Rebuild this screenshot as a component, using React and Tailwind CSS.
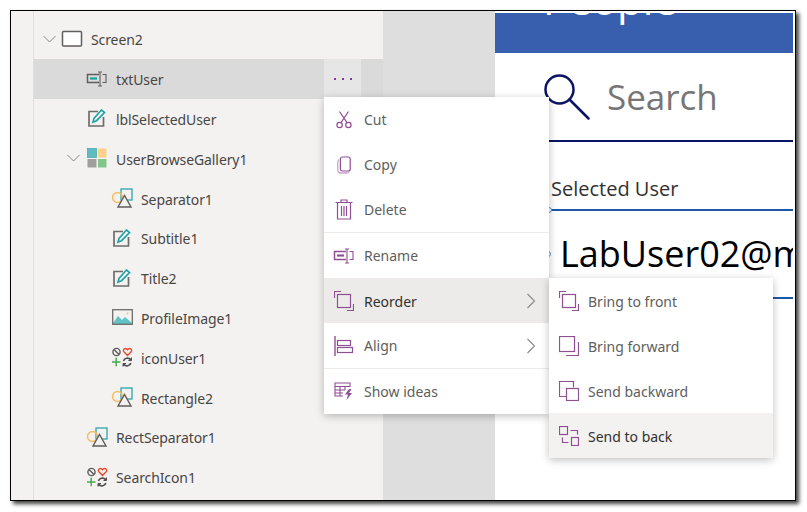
import React from 'react';

const Chevron = ({ className }) => (
  <svg width="13" height="8" viewBox="0 0 13 8" fill="none" stroke="#8a8886" strokeWidth="1" className={className}>
    <path d="M.5 1l6 6 6-6" />
  </svg>
);

const ChevronRight = () => (
  <svg width="10" height="16" viewBox="0 0 10 16" fill="none" stroke="#8a8886" strokeWidth="1.1" className="ml-auto mr-[13px]">
    <path d="M1.5 1l7 7-7 7" />
  </svg>
);

const ScreenIcon = () => (
  <svg width="22" height="18" viewBox="0 0 22 18" fill="#fff" stroke="#605e5c" strokeWidth="1.5">
    <rect x="1.5" y="1.5" width="19" height="14.5" rx="1" />
  </svg>
);

const InputIcon = ({ frame = '#605e5c', bar = '#16a0a0' }) => (
  <svg width="22" height="16" viewBox="0 0 22 16" fill="none">
    <path d="M13 3.5H1.5v8H13" stroke={frame} strokeWidth="1.5" />
    <path d="M4 7.5h7" stroke={bar} strokeWidth="2.2" />
    <path d="M12 1h4M14 1v14M12 15h4M16.5 3.5h3.5v8h-3.5" stroke={frame} strokeWidth="1.1" />
  </svg>
);

const LabelIcon = () => (
  <svg width="18" height="18" viewBox="0 0 18 18" fill="none">
    <path d="M10 2.5H1v14.5h14.5V8" stroke="#6e6c6a" strokeWidth="1.7" />
    <path d="M5 13l1-3.5L13.5 1l3 2.5-8 8.2z" fill="#fff" stroke="#22a3a3" strokeWidth="1.7" />
  </svg>
);

const GalleryIcon = () => (
  <svg width="20" height="20" viewBox="0 0 20 20">
    <rect x="0.5" y="0.5" width="9" height="9" fill="#5cbcc0" stroke="#2e9ea3" strokeWidth="0.6" />
    <rect x="11" y="0.5" width="8.5" height="9" fill="#fdd08c" />
    <rect x="0.5" y="11" width="9" height="8.5" fill="#a19f9d" />
    <rect x="11" y="11" width="8.5" height="8.5" fill="#81c688" />
  </svg>
);

const ShapesIcon = () => (
  <svg width="22" height="20" viewBox="0 0 22 20" fill="none">
    <rect x="10" y="1" width="11" height="11" stroke="#30a5a8" strokeWidth="1.3" />
    <circle cx="6.5" cy="9.5" r="5" stroke="#f8bc5c" strokeWidth="1.4" />
    <path d="M20 19H7l6.5-11.5z" fill="#f3f2f1" stroke="#605e5c" strokeWidth="1.4" />
  </svg>
);

const GlyphsIcon = () => (
  <svg width="22" height="20" viewBox="0 0 22 20" fill="none">
    <circle cx="5.5" cy="5" r="3.6" stroke="#605e5c" strokeWidth="1.4" />
    <path d="M3 2.5l5 5" stroke="#605e5c" strokeWidth="1.4" />
    <path d="M16.5 8.5l-3.6-3.8c-1.8-2.2 1.6-4.6 3.6-2 2-2.6 5.4-.2 3.6 2z" stroke="#ea4a2f" strokeWidth="1.4" />
    <path d="M1 15h8.5M5.2 10.8v8.5" stroke="#4aa84f" strokeWidth="1.5" />
    <path d="M12.5 14c.5-3 5-3.8 7-1.5M19.8 16c-.5 3-5 3.8-7 1.5" stroke="#514f4d" strokeWidth="1.6" />
    <path d="M20.5 10.5v3h-3M12 19.5v-3h3" fill="#514f4d" stroke="#514f4d" strokeWidth="1" />
  </svg>
);

const ImageIcon = () => (
  <svg width="21" height="16" viewBox="0 0 21 16" fill="none">
    <path d="M1 14l5-7 4 4 3-3 7 6v1H1z" fill="#61c3c3" />
    <rect x="0.7" y="0.7" width="19.6" height="14.6" stroke="#6e6c6a" strokeWidth="1.3" />
    <circle cx="15.5" cy="4.5" r="0.9" fill="#f8bc5c" />
  </svg>
);

const P = '#8f4f93';

const CutIcon = () => (
  <svg width="16" height="18" viewBox="0 0 16 18" fill="none" stroke={P} strokeWidth="1.2">
    <circle cx="3.6" cy="14" r="2.7" />
    <circle cx="12.4" cy="14" r="2.7" />
    <path d="M5 11.7L12.5 0.5M11 11.7L3.5 0.5" />
  </svg>
);

const CopyIcon = () => (
  <svg width="14" height="18" viewBox="0 0 14 18" fill="none">
    <path d="M2.2 3.5C1 4 .8 5 .8 6v8c0 2 1 3 3 3h6c1 0 1.6-.3 2-1" stroke="#c9a5cb" strokeWidth="1.3" />
    <rect x="3.4" y="1" width="9.8" height="14" rx="2" stroke={P} strokeWidth="1.2" />
  </svg>
);

const DeleteIcon = () => (
  <svg width="18" height="21" viewBox="0 0 18 21" fill="none" stroke={P} strokeWidth="1.2">
    <path d="M.5 3.5h17M6 3.5V1h6v2.5M2.5 3.5V20h13V3.5" />
    <path d="M6.5 7v10M9 7v10M11.5 7v10" />
  </svg>
);

const AlignIcon = () => (
  <svg width="20" height="20" viewBox="0 0 20 20" fill="none" stroke={P} strokeWidth="1.2">
    <path d="M1 0v20" strokeWidth="1.4" />
    <rect x="3.5" y="4.5" width="13" height="5" />
    <rect x="3.5" y="11.5" width="15" height="5" />
  </svg>
);

const IdeasIcon = () => (
  <svg width="20" height="19" viewBox="0 0 20 19" fill="none" stroke={P} strokeWidth="1.1">
    <path d="M1 1h15v3.5H1zM1 4.5V14h8M6 4.5V14M11 4.5V8M1 8h10M1 11h8" />
    <path d="M15 7l-4 5.5h3l-1.5 5.5 5.5-7h-3l2.5-4z" fill={P} stroke="none" />
  </svg>
);

const FrontIcon = () => (
  <svg width="20" height="20" viewBox="0 0 20 20" fill="none" stroke={P} strokeWidth="1.2">
    <path d="M.5 7V.5H7" />
    <path d="M13 19.5h6.5V13" />
    <rect x="3.5" y="3.5" width="13" height="13" />
  </svg>
);

const ForwardIcon = () => (
  <svg width="20" height="20" viewBox="0 0 20 20" fill="none" stroke={P} strokeWidth="1.2">
    <rect x=".5" y=".5" width="15" height="15" />
    <path d="M7 19.5h12.5V6" />
  </svg>
);

const BackwardIcon = () => (
  <svg width="20" height="20" viewBox="0 0 20 20" fill="none" stroke={P} strokeWidth="1.2">
    <path d="M7.5 15.5h-7V.5h14v6" />
    <rect x="7.5" y="7.5" width="12" height="12" />
  </svg>
);

const BackIcon = () => (
  <svg width="20" height="20" viewBox="0 0 20 20" fill="none" stroke={P} strokeWidth="1.2">
    <rect x=".5" y=".5" width="8" height="8" />
    <rect x="12.5" y="11.5" width="7" height="8" />
    <path d="M11.5 4.5h7v4M9.5 16.5h-6v-5" />
  </svg>
);

const treeRows = [
  { name: 'Screen2', pad: 'pl-[9px]', chevron: 'mr-[5px]', icon: <ScreenIcon />, gap: 'gap-[8px]' },
  { name: 'txtUser', pad: 'pl-[52px]', icon: <InputIcon />, gap: 'gap-[8px]', selected: true },
  { name: 'lblSelectedUser', pad: 'pl-[54px]', icon: <LabelIcon />, gap: 'gap-[10px]' },
  { name: 'UserBrowseGallery1', pad: 'pl-[33px]', chevron: 'mr-[7px]', icon: <GalleryIcon />, gap: 'gap-[9px]' },
  { name: 'Separator1', pad: 'pl-[77px]', icon: <ShapesIcon />, gap: 'gap-[8px]' },
  { name: 'Subtitle1', pad: 'pl-[79px]', icon: <LabelIcon />, gap: 'gap-[10px]' },
  { name: 'Title2', pad: 'pl-[79px]', icon: <LabelIcon />, gap: 'gap-[10px]' },
  { name: 'ProfileImage1', pad: 'pl-[78px]', icon: <ImageIcon />, gap: 'gap-[8px]' },
  { name: 'iconUser1', pad: 'pl-[77px]', icon: <GlyphsIcon />, gap: 'gap-[8px]' },
  { name: 'Rectangle2', pad: 'pl-[77px]', icon: <ShapesIcon />, gap: 'gap-[8px]' },
  { name: 'RectSeparator1', pad: 'pl-[52px]', icon: <ShapesIcon />, gap: 'gap-[8px]' },
  { name: 'SearchIcon1', pad: 'pl-[52px]', icon: <GlyphsIcon />, gap: 'gap-[8px]' },
];

const TreeRow = ({ row }) => (
  <div className={`relative flex h-[39.8px] shrink-0 items-center text-[14px] tracking-[-0.1px] text-[#484644] ${row.selected ? 'bg-[#dadada]' : ''} ${row.pad}`}>
    {row.chevron && <Chevron className={row.chevron} />}
    <div className={`flex items-center ${row.gap}`}>
      {row.icon}
      <span className="pt-[2px]">{row.name}</span>
    </div>
    {row.selected && (
      <div className="absolute left-[290px] top-0 flex h-full w-[37px] items-center justify-center gap-[6px] bg-[#e6e6e6]">
        <span className="h-[2px] w-[2px] bg-[#7d3c98]" />
        <span className="h-[2px] w-[2px] bg-[#7d3c98]" />
        <span className="h-[2px] w-[2px] bg-[#7d3c98]" />
      </div>
    )}
  </div>
);

const MenuItem = ({ icon, label, active, sub, hover, low, slot = 'w-[40px]' }) => (
  <div className={`flex h-[45px] items-center text-[14px] ${active ? 'bg-[#edebe9] text-[#323130]' : hover ? 'bg-[#f3f2f1] text-[#323130]' : 'text-[#605e5c]'}`}>
    <div className={`flex shrink-0 justify-center ${slot}`}>{icon}</div>
    <span className={low ? 'pt-[2px]' : ''}>{label}</span>
    {sub && <ChevronRight />}
  </div>
);

const Handle = ({ className }) => (
  <span className={`absolute h-[6px] w-[6px] rounded-full border border-[#4b8fd0] bg-white ${className}`} />
);

export default function App() {
  return (
    <div className="h-[512px] w-[807px] overflow-hidden bg-white pl-[10px] pt-[10px] font-['Noto_Sans',sans-serif]">
      <div className="relative flex h-[491px] w-[786px] overflow-hidden border border-black shadow-[3px_3px_4px_rgba(0,0,0,0.75)]">
        <div className="w-[22px] shrink-0 bg-[#f3f2f1]" />
        <div className="flex w-[350px] shrink-0 flex-col overflow-hidden border-l border-[#e1dfdd] bg-[#f3f2f1] pt-[8px]">
          {treeRows.map((row) => (
            <TreeRow key={row.name} row={row} />
          ))}
        </div>
        <div className="w-[112px] shrink-0 bg-[#dedede]" />
        <div className="flex min-w-0 flex-1 flex-col overflow-hidden bg-white pr-[2px] pt-[2px] font-['Open_Sans',sans-serif]">
          <div className="h-[40px] shrink-0 overflow-hidden bg-[#375fae] pl-[48px]">
            <div className="mt-[-35px] text-[42px] leading-[42px] text-white">People</div>
          </div>
          <div className="flex h-[87px] shrink-0 items-center gap-[17px] pl-[49px]">
            <svg width="46" height="46" viewBox="0 0 46 46" fill="none" stroke="#0b1464" strokeWidth="2.5" className="mt-[1px]">
              <circle cx="15.5" cy="15.5" r="14" />
              <path d="M25.5 25.5l19 19" strokeLinecap="round" />
            </svg>
            <span className="text-[35px] leading-none text-[#767676]">Search</span>
          </div>
          <div className="ml-[45px] h-[2px] shrink-0 bg-[#0b1464]" />
          <div className="flex h-[67px] shrink-0 items-center pl-[56px] pt-[27px] text-[20px] leading-none text-[#323130]">
            Selected User
          </div>
          <div className="relative ml-[45px] h-[2px] shrink-0 bg-[#1f56a8]">
            <Handle className="left-[6px] top-[-2px]" />
          </div>
          <div className="relative flex h-[86px] shrink-0 items-center overflow-hidden whitespace-nowrap pl-[65px] text-[36px] leading-none text-black">
            <Handle className="left-[50px] top-[40px]" />
            LabUser02@m
          </div>
          <div className="ml-[45px] h-[2px] shrink-0 bg-[#1f56a8]" />
        </div>

        {/* context menu */}
        <div className="absolute left-[313px] top-[86px] w-[225px] divide-y divide-[#edebe9] bg-white shadow-[0_2px_8px_rgba(0,0,0,0.25)]">
          <div>
            <MenuItem icon={<CutIcon />} label="Cut" />
            <MenuItem icon={<CopyIcon />} label="Copy" />
            <MenuItem icon={<DeleteIcon />} label="Delete" />
          </div>
          <div>
            <MenuItem icon={<InputIcon frame={P} bar={P} />} label="Rename" />
            <MenuItem icon={<FrontIcon />} label="Reorder" sub active low />
            <MenuItem icon={<AlignIcon />} label="Align" sub />
          </div>
          <div>
            <MenuItem icon={<IdeasIcon />} label="Show ideas" />
          </div>
        </div>

        {/* reorder submenu */}
        <div className="absolute left-[538px] top-[267px] w-[224px] bg-white shadow-[0_2px_8px_rgba(0,0,0,0.25)]">
          <MenuItem icon={<FrontIcon />} label="Bring to front" slot="w-[39px]" low />
          <MenuItem icon={<ForwardIcon />} label="Bring forward" slot="w-[39px]" low />
          <MenuItem icon={<BackwardIcon />} label="Send backward" slot="w-[39px]" low />
          <MenuItem icon={<BackIcon />} label="Send to back" slot="w-[39px]" hover low />
        </div>
      </div>
    </div>
  );
}
